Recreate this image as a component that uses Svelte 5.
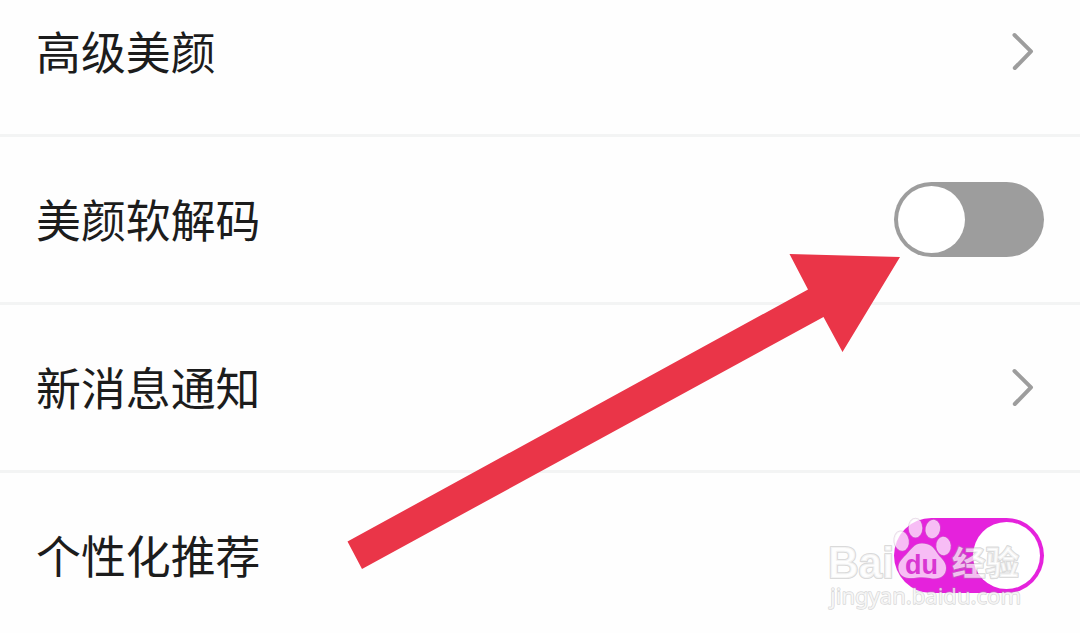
<script lang="ts">
    interface Setting {
        label: string;
        type: "link" | "toggle";
        on?: boolean;
    }

    let settings: Setting[] = $state([
        { label: "高级美颜", type: "link" },
        { label: "美颜软解码", type: "toggle", on: false },
        { label: "新消息通知", type: "link" },
        { label: "个性化推荐", type: "toggle", on: true },
    ]);
</script>

<main class="screen">
    <div class="settings">
        {#each settings as item}
            <div class="row">
                <span class="label">{item.label}</span>
                {#if item.type === "toggle"}
                    <button
                        class="toggle"
                        class:on={item.on}
                        role="switch"
                        aria-checked={item.on}
                        aria-label={item.label}
                        onclick={() => (item.on = !item.on)}
                    >
                        <span class="knob"></span>
                    </button>
                {:else}
                    <svg class="chevron" viewBox="0 0 24 40" width="24" height="40">
                        <polyline points="4.5 3 21 19.3 4.8 36" />
                    </svg>
                {/if}
            </div>
        {/each}
    </div>

    <svg class="overlay" viewBox="0 0 1080 633" width="1080" height="633" aria-hidden="true">
        <polygon
            class="arrow"
            points="789.5,254 900,257 842.5,352 823.5,317 362,569 347.5,541.5 808,289.5"
        />

        <g class="watermark">
            <text class="brand" x="828" y="577.5" textLength="66" lengthAdjust="spacingAndGlyphs">Bai</text>
            <g class="paw">
                <ellipse cx="901.5" cy="541" rx="7.3" ry="9.8" transform="rotate(-8 901.5 541)" />
                <ellipse cx="915.5" cy="528" rx="6.8" ry="9.5" />
                <ellipse cx="932.8" cy="529" rx="7.2" ry="9.3" transform="rotate(12 932.8 529)" />
                <ellipse cx="943.5" cy="546" rx="7.2" ry="9.3" transform="rotate(-5 943.5 546)" />
                <path
                    d="M922 543.5 C914 543.5 911 550 906 555 C901 560 897 564 899 571 C901 578 909 579 917 577.5 C921 577 925 577 930 578 C939 580 946 576 946 568 C946 561 940 558 937 553 C933 547 930 543.5 922 543.5 Z"
                />
            </g>
            <text class="du" x="905" y="573.5" textLength="33" lengthAdjust="spacingAndGlyphs">du</text>
            <text class="cn" x="952" y="574.5" textLength="67" lengthAdjust="spacingAndGlyphs">经验</text>
            <text class="url" x="830" y="604" textLength="191" lengthAdjust="spacingAndGlyphs">jingyan.baidu.com</text>
        </g>
    </svg>
</main>

<style>
    :global(body) {
        background: #fefefe;
        overflow: hidden;
    }

    .screen {
        position: relative;
        width: 1080px;
        height: 633px;
        overflow: hidden;
        background: #fefefe;
        font-family: "Noto Sans CJK SC", sans-serif;
    }

    .settings {
        display: flex;
        flex-direction: column;
        margin-top: -31px;
    }

    .row {
        display: flex;
        align-items: center;
        justify-content: space-between;
        box-sizing: border-box;
        height: 168px;
        padding: 0 36px;
        border-bottom: 3px solid #f3f4f4;
    }

    .label {
        padding-bottom: 1px;
        font-size: 44.9px;
        line-height: 60px;
        color: #1c1c1c;
    }

    .toggle {
        display: flex;
        box-sizing: border-box;
        width: 150px;
        height: 75px;
        padding: 4px;
        border: none;
        border-radius: 38px;
        background: #9d9d9d;
        cursor: pointer;
    }

    .toggle.on {
        justify-content: flex-end;
        background: #e522dc;
    }

    .knob {
        width: 67px;
        height: 67px;
        border-radius: 50%;
        background: #ffffff;
    }

    .chevron {
        margin-right: 10px;
        fill: none;
        stroke: #9d9d9d;
        stroke-width: 4;
        stroke-linecap: round;
        stroke-linejoin: round;
    }

    .overlay {
        position: absolute;
        top: 0;
        left: 0;
        pointer-events: none;
    }

    .arrow {
        fill: #ea3548;
    }

    .watermark {
        fill: rgba(255, 255, 255, 0.7);
        stroke: rgba(160, 160, 160, 0.4);
        stroke-width: 2.2;
        stroke-linejoin: round;
        paint-order: stroke;
    }

    .brand {
        font: bold 44px "Liberation Sans", sans-serif;
    }

    .paw {
        stroke: rgba(190, 150, 190, 0.35);
        stroke-width: 1.6;
    }

    .du {
        font: bold 28px "Liberation Sans", sans-serif;
        fill: #d936d2;
        stroke: none;
    }

    .cn {
        font: bold 33.5px "Noto Sans CJK SC", sans-serif;
    }

    .url {
        font: 22.5px "Noto Sans", sans-serif;
        stroke-width: 1.5;
    }
</style>
